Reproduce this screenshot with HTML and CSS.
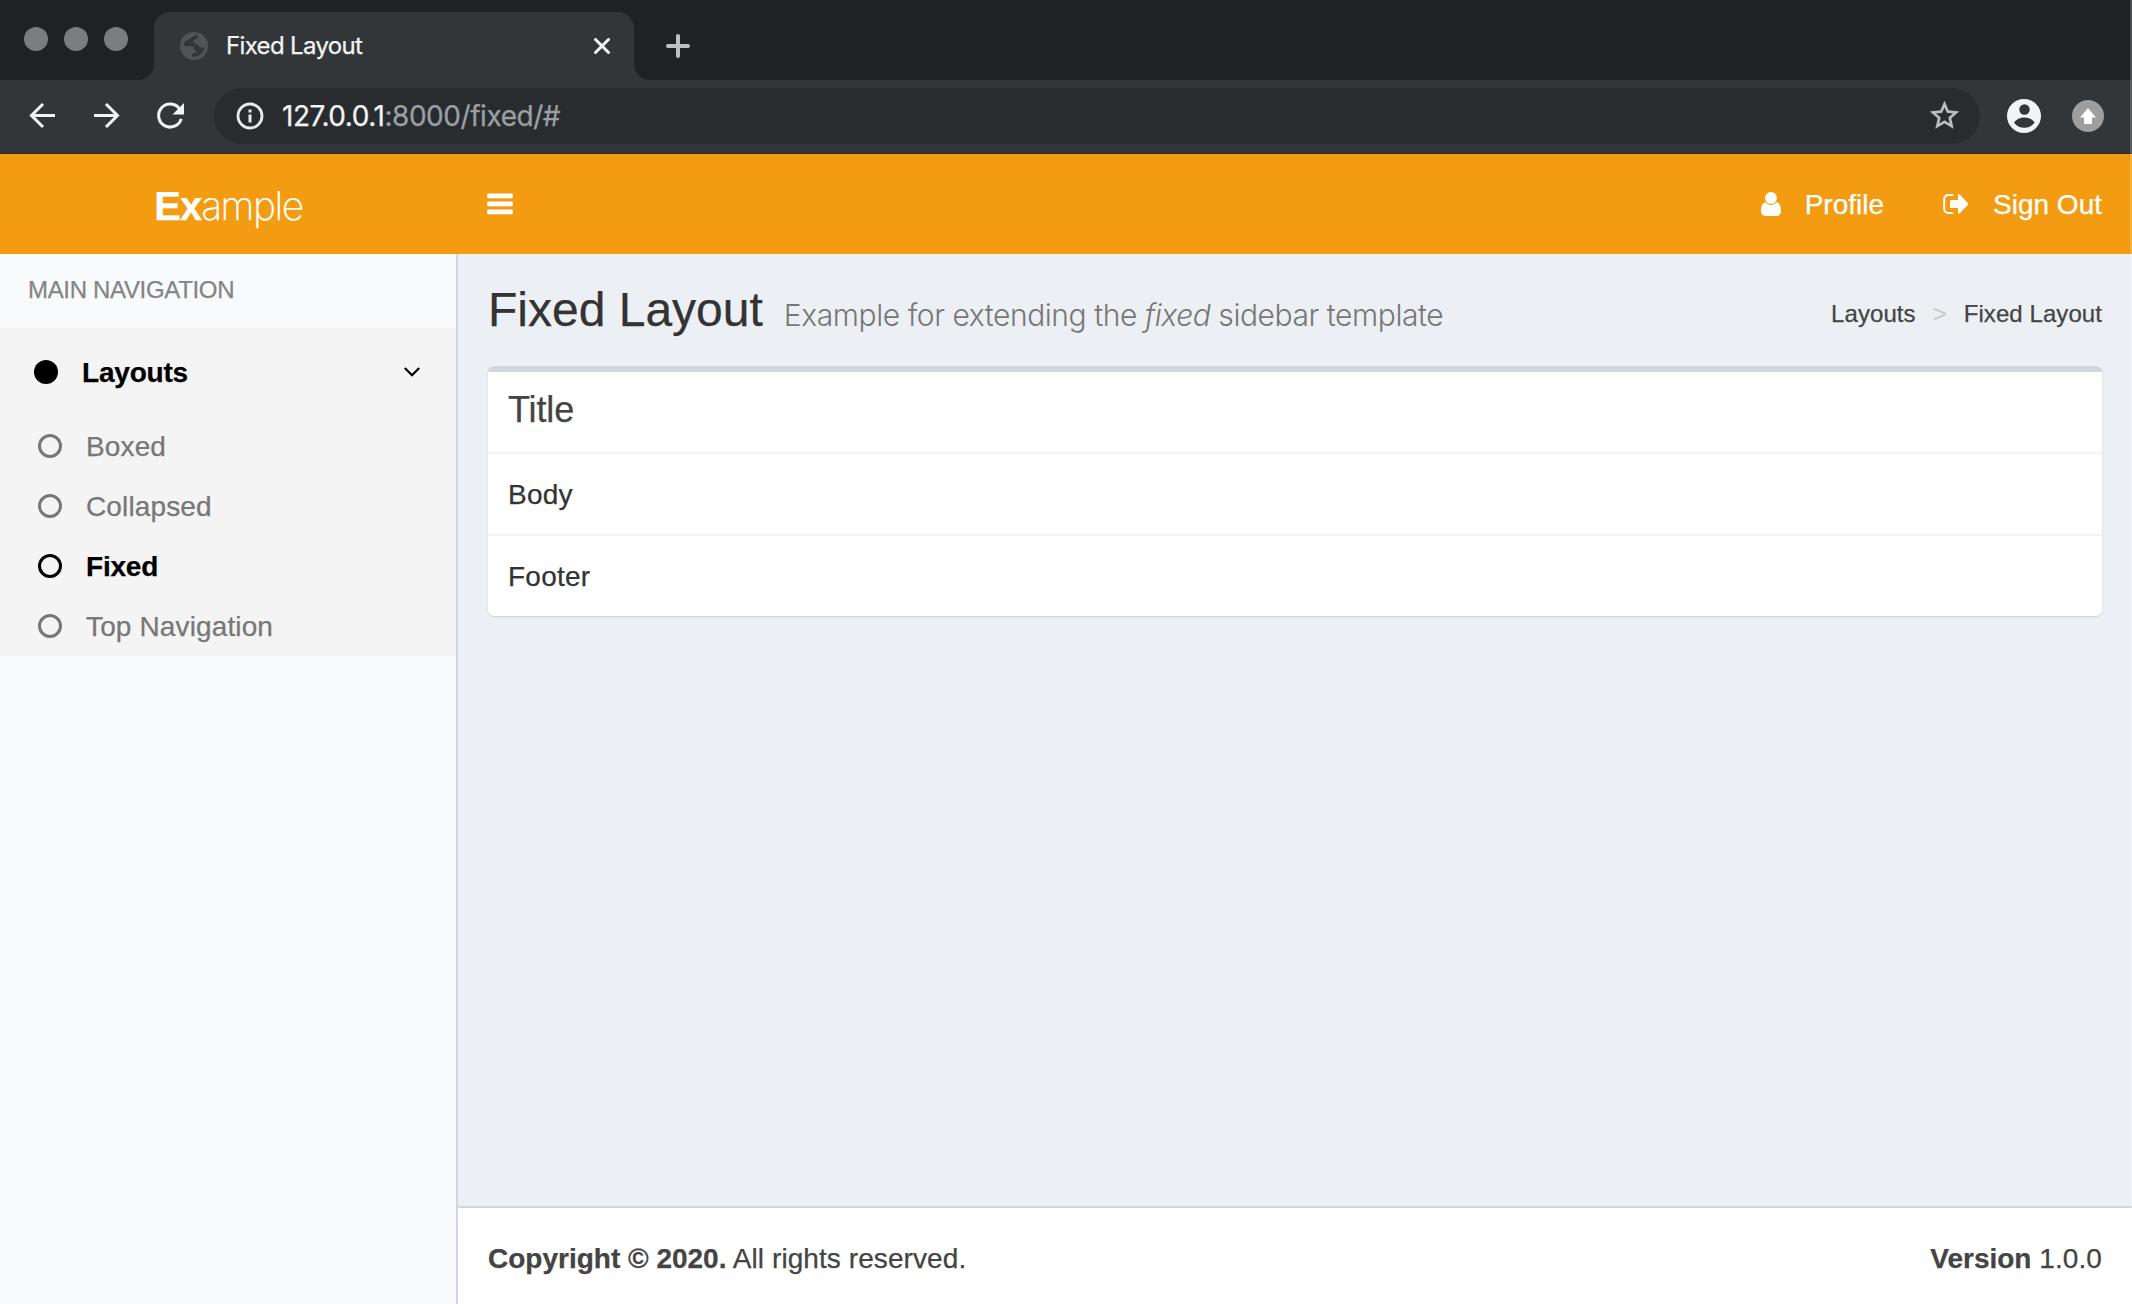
FILE: index.html
```html
<!DOCTYPE html>
<html lang="en">
<head>
<meta charset="utf-8">
<title>Fixed Layout</title>
<link rel="stylesheet" href="styles.css">
</head>
<body>
<div class="window">
  <div class="tabstrip">
    <div class="lights"><i></i><i></i><i></i></div>
    <div class="tab">
      <svg class="globe" viewBox="2 2 20 20" width="28" height="28"><path fill="#505457" d="M12 2a10 10 0 1 0 0 20 10 10 0 0 0 0-20z"/><path fill="#323639" d="M13.6 4.2c-.5 1-1.600.9-2.700 1.200-1.300.4-1.300 1.900-2.900 2.200-1.500.3-2.400 1.300-3.200 2.600-.2.600-.3 1.200-.3 1.800h5.600c1.500 0 1.900.9 1.900 2.100 0 1 .9 1 1.600 1.300v1.200c-1 .4-2.600.3-3 1.100-.2.700.1 1.300.6 1.900a7.800 7.800 0 0 0 8.500-6.800c-1.500.6-2.900.5-3.700-.1-.7-.600-.9-1.800-2.100-2.100-1.700-.3-2.600-1-2.500-2.200.1-1 1.100-1.300 2.400-1.500 1.100-.2 1.100-1.300 1-2.500z"/></svg>
      <span class="tab-title">Fixed Layout</span>
      <svg class="close" viewBox="0 0 16 16" width="16" height="16"><path d="M1.500 1.500l13 13m0-13l-13 13"/></svg>
    </div>
    <svg class="plus" viewBox="0 0 24 24" width="24" height="24"><path d="M12 2v20M2 12h20"/></svg>
  </div>
  <div class="toolbar">
    <svg class="nav-icon" viewBox="0 0 28 28" width="28" height="28"><path d="M26 13.500H3M14 2L2.500 13.500 14 25"/></svg>
    <svg class="nav-icon" viewBox="0 0 28 28" width="28" height="28"><path d="M1 13.500h23.500M13 2l11.500 11.500L13 25"/></svg>
    <svg class="nav-icon" viewBox="0 0 28 28" width="28" height="28"><path d="M24.200 16.800A11.500 11.500 0 1 1 22.600 7"/><path class="solid" d="M27 1v11.500H15.500z"/></svg>
    <div class="omnibox">
      <svg viewBox="0 0 28 28" width="28" height="28"><circle cx="14" cy="14" r="12" fill="none" stroke="#e8eaed" stroke-width="2.800"/><path fill="#e8eaed" d="M12.500 7.500h3v3h-3zM12.500 12.500h3v8h-3z"/></svg>
      <span class="url"><span class="host">127.0.0.1</span><span class="path">:8000/fixed/#</span></span>
      <svg class="star" viewBox="2 2 20 20" width="29" height="29"><path d="M22 9.240l-7.190-.62L12 2 9.190 8.630 2 9.240l5.460 4.730L5.820 21 12 17.270 18.180 21l-1.630-7.030L22 9.240zM12 15.400l-3.760 2.270 1-4.280-3.320-2.880 4.380-.38L12 6.100l1.710 4.040 4.380.38-3.320 2.880 1 4.280L12 15.400z"/></svg>
    </div>
    <svg class="account" viewBox="0 0 34 34" width="34" height="34"><circle cx="17" cy="17" r="17" fill="#f1f3f4"/><circle cx="17.500" cy="10.500" r="5.200" fill="#323639"/><path fill="#323639" d="M7 23.500c2.500-3.500 6-5 10.300-5s7.900 1.500 10.300 5c-2.500 3.500-6 5.300-10.300 5.300s-8-1.800-10.300-5.300z"/></svg>
    <svg class="update" viewBox="0 0 32 32" width="32" height="32"><circle cx="16" cy="16" r="16" fill="#9e9e9e"/><path fill="#fff" d="M16 8l8 9.500h-4V24h-8v-6.500H8z"/></svg>
  </div>

  <header class="header">
    <div class="logo"><b>Ex</b><span>ample</span></div>
    <svg class="burger" viewBox="0 0 26 22" width="26" height="22"><path d="M1.200 0.500h23.600a1 1 0 0 1 1 1v2.700a1 1 0 0 1-1 1H1.200a1 1 0 0 1-1-1V1.500a1 1 0 0 1 1-1zM1.200 8.500h23.600a1 1 0 0 1 1 1v2.700a1 1 0 0 1-1 1H1.200a1 1 0 0 1-1-1V9.500a1 1 0 0 1 1-1zM1.200 16.500h23.600a1 1 0 0 1 1 1v2.700a1 1 0 0 1-1 1H1.200a1 1 0 0 1-1-1v-2.700a1 1 0 0 1 1-1z"/></svg>
    <nav class="user-nav">
      <svg class="user" viewBox="0 0 20 24" width="20" height="24"><circle cx="10" cy="6" r="6"/><path d="M4.600 10.300C1.300 10.800 0 14.500 0 18.800 0 21.800 1.600 24 4.200 24h11.600c2.600 0 4.200-2.200 4.200-5.200 0-4.300-1.300-8-4.600-8.500C14 12 12.200 13 10 13s-4-1-5.400-2.700z"/></svg>
      <span>Profile</span>
      <svg class="signout" viewBox="0 0 26 20" width="26" height="20"><path fill="none" stroke="#fff" stroke-width="2" d="M10.200 1H5.200A4 4 0 0 0 1.200 5v10a4 4 0 0 0 4 4h5"/><path d="M8 6h7V1.300c0-1 1-1.400 1.700-.7l8 8.400c.5.600.5 1.300 0 1.900l-8 8.400c-.7.700-1.700.3-1.700-.7V14H8c-.7 0-1-.4-1-1V7c0-.6.3-1 1-1z"/></svg>
      <span>Sign Out</span>
    </nav>
  </header>

  <div class="body">
    <aside class="sidebar">
      <div class="nav-heading">MAIN NAVIGATION</div>
      <ul class="menu">
        <li class="parent"><i class="dot"></i><span>Layouts</span><svg viewBox="0 0 16 10" width="16" height="10"><path d="M.8 1L8 8.200 15.200 1"/></svg></li>
        <li><i class="ring"></i><span>Boxed</span></li>
        <li><i class="ring"></i><span>Collapsed</span></li>
        <li class="active"><i class="ring"></i><span>Fixed</span></li>
        <li><i class="ring"></i><span>Top Navigation</span></li>
      </ul>
    </aside>
    <main class="main">
      <section class="content">
        <div class="page-head">
          <h1>Fixed Layout</h1>
          <small>Example for extending the <em>fixed</em> sidebar template</small>
          <div class="crumbs"><span>Layouts</span><span class="sep">&gt;</span><span>Fixed Layout</span></div>
        </div>
        <div class="box">
          <h3>Title</h3>
          <div class="row">Body</div>
          <div class="row">Footer</div>
        </div>
      </section>
      <footer class="footer"><span><b>Copyright © 2020.</b> All rights reserved.</span><span><b>Version</b> 1.0.0</span></footer>
    </main>
  </div>
</div>
</body>
</html>
```
FILE: styles.css
```css
* { box-sizing: border-box; }
body {
  margin: 0;
  font: 28px/40px "Liberation Sans", Arial, sans-serif;
  color: #333;
}
ul, h1, h3 { margin: 0; padding: 0; font-weight: 400; }
ul { list-style: none; }
svg { display: block; flex: none; fill: #fff; }

.window {
  position: relative;
  display: flex;
  flex-direction: column;
  height: 1304px;
  overflow: hidden;
  background: #ecf0f5;
  -webkit-text-stroke: .25px;
}
/* Light edge along the right side of the window */
.window::after {
  content: "";
  position: absolute;
  inset: 0 0 0 auto;
  width: 2px;
  background: rgba(255, 255, 255, .2);
}

/* Browser chrome */
.tabstrip {
  display: flex;
  height: 80px;
  background: #202124;
  font-family: Inter, sans-serif;
}
.lights { display: flex; gap: 16px; width: 154px; padding: 27px 0 0 24px; }
.lights i { width: 24px; height: 24px; border-radius: 50%; background: #7b7c7e; }
.tab {
  position: relative;
  display: flex;
  align-items: center;
  width: 480px;
  height: 68px;
  margin-top: 12px;
  padding: 0 24px 0 26px;
  border-radius: 16px 16px 0 0;
  background: #323639;
}
.tab::before, .tab::after {
  content: "";
  position: absolute;
  bottom: 0;
  width: 16px;
  height: 16px;
}
.tab::before { left: -16px; background: radial-gradient(circle at 0 0, #202124 15.500px, #323639 16.500px); }
.tab::after { right: -16px; background: radial-gradient(circle at 100% 0, #202124 15.500px, #323639 16.500px); }
.tab-title { flex: 1; margin-left: 18px; font-size: 24px; letter-spacing: -.66px; color: #f1f3f4; }
.close, .plus, .nav-icon { fill: none; stroke: #f1f3f4; stroke-width: 3; stroke-linecap: round; }
.plus { margin: 34px 0 0 32px; stroke: #bdc1c6; stroke-width: 4; }

.toolbar {
  display: flex;
  align-items: center;
  height: 74px;
  padding: 0 28px 2px 29px;
  border-bottom: 1px solid #25282a;
  background: #323639;
  font-family: Inter, sans-serif;
}
.nav-icon { margin-right: 36px; stroke-linecap: butt; }
.nav-icon .solid { fill: #f1f3f4; stroke: none; }
.omnibox {
  display: flex;
  align-items: center;
  width: 1766px;
  height: 56px;
  margin-left: -7px;
  padding: 0 21px 0 22px;
  border-radius: 28px;
  background: #292c2f;
}
.url { flex: 1; margin-left: 18px; letter-spacing: -.45px; }
.host { color: #f1f3f4; }
.path { color: #9aa0a6; }
.star { fill: #bdc1c6; stroke: #bdc1c6; stroke-width: .2; }
.account { margin-left: 27px; }
.update { margin-left: 31px; }

/* Application header */
.header {
  display: flex;
  align-items: center;
  height: 100px;
  padding-right: 30px;
  background: #f39c12;
  color: #fff;
}
.logo { width: 458px; padding: 4px 1px 0 0; font-size: 40px; text-align: center; }
.logo b { letter-spacing: -1px; }
.logo span { font: 200 39px Inter, sans-serif; letter-spacing: -1.500px; line-height: 40px; }
.burger { margin-left: 29px; }
.user-nav { display: flex; align-items: center; margin-left: auto; }
.user-nav span { padding-top: 1px; }
.user { margin-right: 24px; }
.signout { margin: 0 24px 0 59px; }

/* Sidebar */
.body { display: flex; flex: 1; }
.sidebar { width: 458px; border-right: 2px solid #d2d6de; background: #f9fafc; }
.nav-heading { height: 74px; padding: 16px 28px; font-size: 24px; letter-spacing: -.33px; color: #848484; }
.menu { background: #f4f4f4; color: #777; }
.menu li { display: flex; align-items: center; gap: 24px; height: 60px; padding-left: 38px; letter-spacing: .13px; }
.menu span { padding-top: 1px; }
.menu .parent { height: 88px; padding: 0 36px 0 34px; font-weight: 700; letter-spacing: -.2px; color: #000; }
.menu .active { font-weight: 700; letter-spacing: -.2px; color: #000; }
.menu svg { margin-left: auto; fill: none; stroke: #000; stroke-width: 2.200; }
.dot, .ring { width: 24px; height: 24px; border-radius: 50%; }
.dot { background: #000; }
.ring { border: 3px solid currentColor; }

/* Page content */
.main { display: flex; flex: 1; flex-direction: column; }
.content { flex: 1; padding: 30px 30px 0; }
.page-head { display: flex; align-items: baseline; height: 82px; }
h1 { font-size: 48px; line-height: 52px; }
small { margin-left: 21px; font: 300 30px/32px Inter, sans-serif; letter-spacing: -.44px; color: #777; -webkit-text-stroke: 0; }
.crumbs { position: relative; top: -4px; display: flex; gap: 17px; margin-left: auto; font-size: 24px; letter-spacing: .07px; color: #444; }
.sep { color: #ccc; }
.box {
  border-top: 6px solid #d2d6de;
  border-radius: 6px;
  background: #fff;
  box-shadow: 0 1px 2px rgba(0, 0, 0, .14);
}
h3 { height: 80px; padding: 20px; font-size: 36px; line-height: 36px; letter-spacing: -.1px; color: #444; }
.row { height: 82px; padding: 21px 20px 19px; border-top: 2px solid #f4f4f4; letter-spacing: .25px; }
.footer {
  display: flex;
  justify-content: space-between;
  height: 98px;
  padding: 31px 30px 29px;
  border-top: 2px solid #d2d6de;
  background: #fff;
  letter-spacing: .08px;
  color: #444;
}
.footer b { letter-spacing: 0; }
```
